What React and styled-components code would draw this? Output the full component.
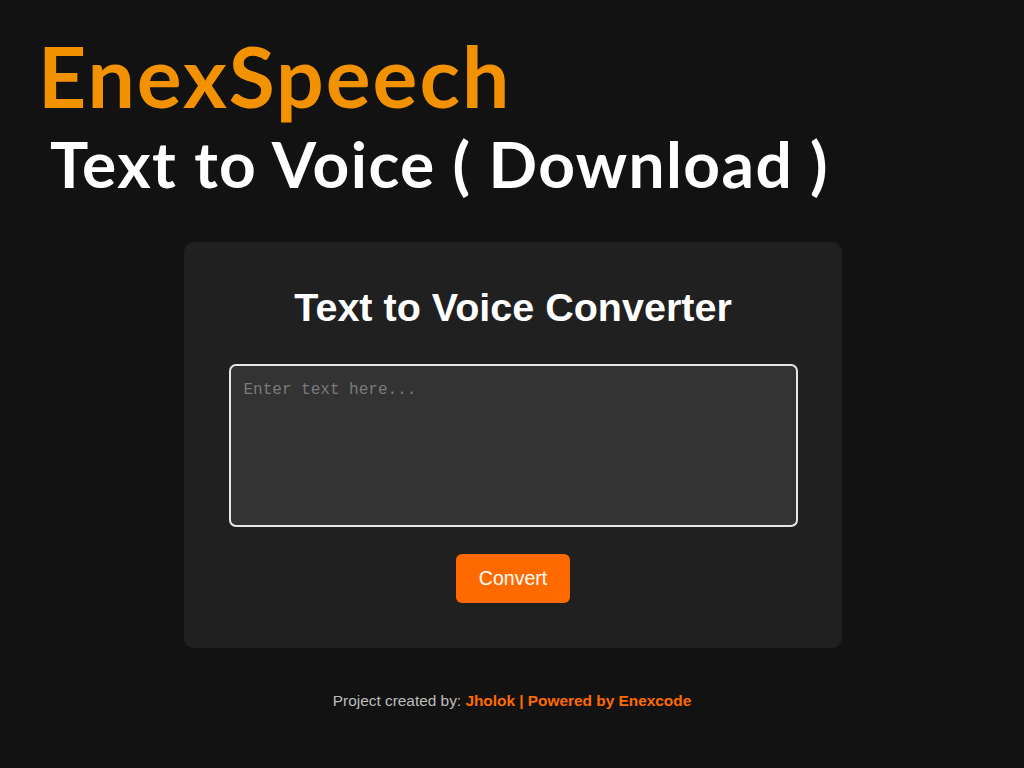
import React from "react";
import styled, { createGlobalStyle } from "styled-components";

const Global = createGlobalStyle`
  html, body { margin: 0; padding: 0; background: #121212; }
  body { width: 1024px; height: 768px; overflow: hidden; }
`;

const Page = styled.div`
  width: 1024px;
  height: 768px;
  background: #121212;
  display: flex;
  flex-direction: column;
  box-sizing: border-box;
  padding: 26px 0 0 0;
`;

const Header = styled.header`
  display: flex;
  flex-direction: column;
  padding-left: 38px;
`;

const Brand = styled.h1`
  margin: 0;
  font-family: "Lato", sans-serif;
  font-weight: 700;
  font-size: 84px;
  line-height: 100px;
  letter-spacing: 2px;
  color: #f39200;
`;

const Subtitle = styled.h2`
  margin: 0;
  padding-left: 12px;
  font-family: "Lato", sans-serif;
  font-weight: 700;
  font-size: 64px;
  line-height: 76px;
  letter-spacing: 1.4px;
  color: #ffffff;
`;

const Card = styled.main`
  align-self: center;
  margin-top: 40px;
  margin-left: 2px;
  width: 658px;
  height: 406px;
  box-sizing: border-box;
  background: #202020;
  border-radius: 10px;
  padding: 43px 44px 0 44px;
  display: flex;
  flex-direction: column;
  align-items: center;
`;

const CardTitle = styled.h3`
  margin: 0;
  font-family: "Liberation Sans", Arial, sans-serif;
  font-weight: 700;
  font-size: 39.5px;
  line-height: 44px;
  color: #ffffff;
`;

const TextArea = styled.textarea`
  margin-top: 35px;
  width: 569px;
  height: 163px;
  box-sizing: border-box;
  background: #333333;
  border: 2px solid #e6e6e6;
  border-radius: 7px;
  padding: 15px 13px;
  resize: none;
  font-family: "Liberation Mono", monospace;
  font-size: 16px;
  color: #ddd;
  outline: none;
  &::placeholder { color: #7a7a7a; }
`;

const Button = styled.button`
  margin-top: 27px;
  width: 114px;
  height: 49px;
  border: none;
  border-radius: 6px;
  background: #ff6a00;
  color: #ffffff;
  font-family: "Liberation Sans", Arial, sans-serif;
  font-size: 19.5px;
  cursor: pointer;
`;

const Footer = styled.footer`
  margin-top: 44px;
  text-align: center;
  font-family: "Liberation Sans", Arial, sans-serif;
  font-size: 15.4px;
  color: #bdbdbd;
`;

const Accent = styled.strong`
  color: #ff6a00;
  font-weight: 700;
`;

export default function App() {
  return (
    <>
      <Global />
      <Page>
        <Header>
          <Brand>EnexSpeech</Brand>
          <Subtitle>Text to Voice ( Download )</Subtitle>
        </Header>
        <Card>
          <CardTitle>Text to Voice Converter</CardTitle>
          <TextArea placeholder="Enter text here..." />
          <Button>Convert</Button>
        </Card>
        <Footer>
          Project created by: <Accent>Jholok | Powered by Enexcode</Accent>
        </Footer>
      </Page>
    </>
  );
}
